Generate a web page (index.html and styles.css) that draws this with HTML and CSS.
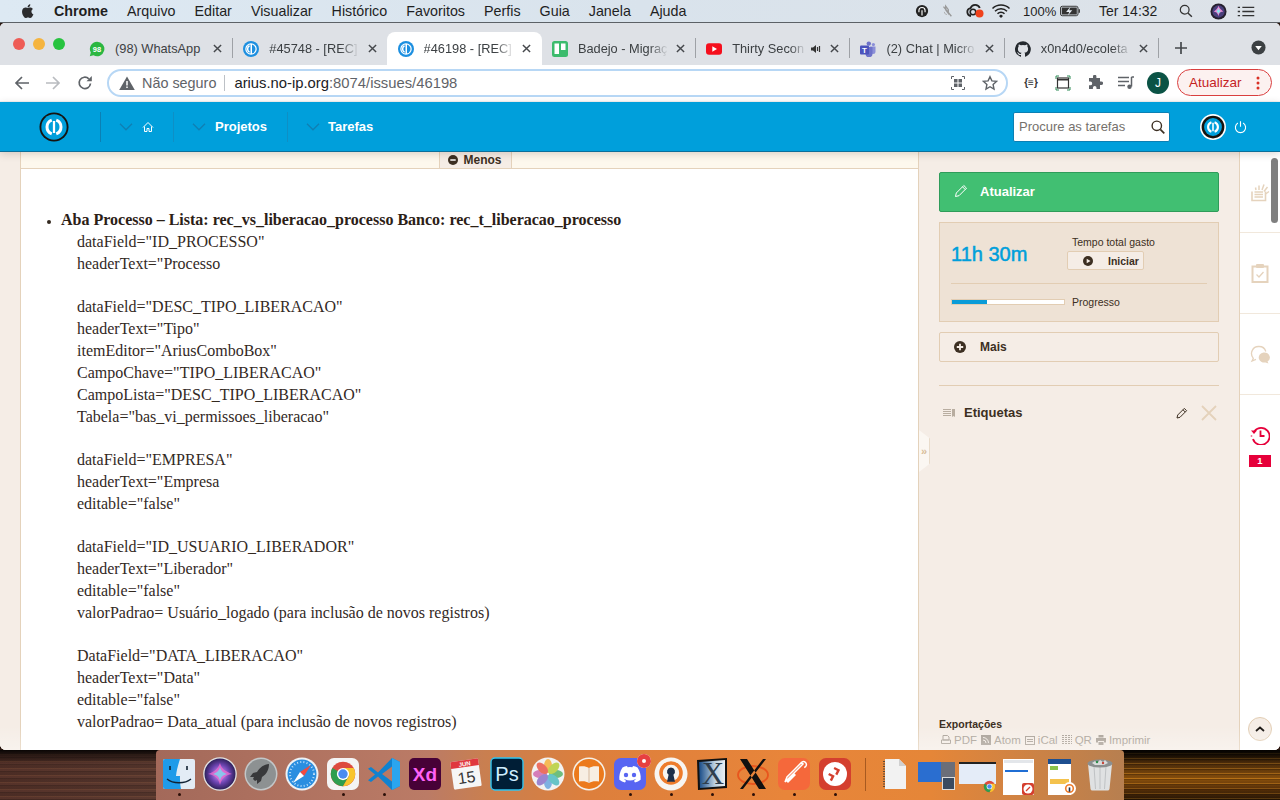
FILE: index.html
```html
<!DOCTYPE html>
<html lang="pt-BR">
<head>
<meta charset="utf-8">
<title>#46198 - [REC]</title>
<link rel="stylesheet" href="styles.css">
</head>
<body>
<svg class="defs" width="0" height="0" aria-hidden="true">
  <symbol id="arius" viewBox="0 0 32 32">
    <circle cx="16" cy="16" r="13.500" fill="#009fdb"/>
    <path d="M13.600 8.700A7.800 7.800 0 0 0 13.600 23.300" fill="none" stroke="#fff" stroke-width="3.200"/>
    <path d="M18.400 8.700A7.800 7.800 0 0 1 18.400 23.300" fill="none" stroke="#fff" stroke-width="3.200"/>
    <path d="M16 9.500V22.500" stroke="#fff" stroke-width="2.400"/>
  </symbol>
  <symbol id="favarius" viewBox="0 0 32 32">
    <circle cx="16" cy="16" r="16" fill="#1c8fe0"/>
    <circle cx="16" cy="16" r="11.500" fill="#fff"/>
    <circle cx="16" cy="16" r="9" fill="#1c8fe0"/>
    <path d="M13 9.500A7.500 7.500 0 0 0 13 22.500" fill="none" stroke="#fff" stroke-width="3"/>
    <path d="M16.500 6V26" stroke="#fff" stroke-width="3"/>
  </symbol>
  <symbol id="closex" viewBox="0 0 10 10"><path d="M1 1l8 8M9 1L1 9" stroke="#45484c" stroke-width="1.600"/></symbol>
  <symbol id="chromelogo" viewBox="0 0 32 32">
    <circle cx="16" cy="16" r="14" fill="#dd4b3e"/>
    <path d="M16 16L3.900 9A14 14 0 0 0 16 30L23 18z" fill="#2e9e4f"/>
    <path d="M16 9H28.100A14 14 0 0 1 16 30L23 18z" fill="#f8c52d"/>
    <circle cx="16" cy="16" r="7" fill="#fff"/>
    <circle cx="16" cy="16" r="5.400" fill="#4a8bf0"/>
  </symbol>
</svg>

<div class="desktop">
  <header class="menubar">
    <svg class="apple" viewBox="0 0 14 16"><path d="M11.400 8.500c0-1.700 1.400-2.500 1.500-2.600-.8-1.200-2.100-1.300-2.500-1.400-1.100-.1-2.100.6-2.600.6-.6 0-1.400-.6-2.300-.6C4.300 4.500 3.200 5.200 2.600 6.300c-1.200 2.100-.3 5.300.9 7 .6.800 1.300 1.800 2.200 1.700.9 0 1.200-.6 2.300-.6s1.400.6 2.300.6 1.600-.8 2.100-1.700c.7-1 1-1.900 1-2-.1 0-2-.7-2-2.800zM9.600 3.400c.5-.6.800-1.400.7-2.200-.7 0-1.500.5-2 1.100-.4.500-.8 1.300-.7 2.100.8 0 1.500-.4 2-1z" fill="#2c2c2e"/></svg>
    <nav class="menus">
      <span class="menu menu-app">Chrome</span>
      <span class="menu">Arquivo</span>
      <span class="menu">Editar</span>
      <span class="menu">Visualizar</span>
      <span class="menu">Histórico</span>
      <span class="menu">Favoritos</span>
      <span class="menu">Perfis</span>
      <span class="menu">Guia</span>
      <span class="menu">Janela</span>
      <span class="menu">Ajuda</span>
    </nav>
    <div class="status">
      <svg class="st st-a" viewBox="0 0 16 16"><circle cx="8" cy="8" r="7" fill="#222"/><path d="M8 4a3.500 3.500 0 0 0-3.500 3.500v2M8 4a3.500 3.500 0 0 1 3.500 3.500v2M8 7v6" stroke="#fff" stroke-width="1.300" fill="none"/></svg>
      <svg class="st st-b" viewBox="0 0 16 16"><path d="M6.500 2.500l3 4v4l-3-4zM4 3l9 11" stroke="#999" stroke-width="1.500" fill="none"/><path d="M5 9c0 2 1.500 3 3 3" stroke="#aaa" fill="none"/></svg>
      <svg class="st st-c" viewBox="0 0 20 16"><path d="M6 13a4 4 0 0 1-.5-7.900A5 5 0 0 1 14.800 5" fill="none" stroke="#222" stroke-width="1.800"/><circle cx="8" cy="9" r="2.800" fill="none" stroke="#222" stroke-width="1.600"/><circle cx="14.500" cy="10.500" r="4" fill="#f0421c"/></svg>
      <svg class="st st-d" viewBox="0 0 20 16"><path d="M1.500 5.500a12 12 0 0 1 17 0M4 8.200a8.500 8.500 0 0 1 12 0M6.500 10.800a5 5 0 0 1 7 0" fill="none" stroke="#222" stroke-width="1.500"/><path d="M8 13l2-1.600 2 1.600-2 2z" fill="#222"/></svg>
      <span class="st-pct">100%</span>
      <svg class="st st-e" viewBox="0 0 24 12"><rect x=".6" y=".6" width="20" height="10.800" rx="2" fill="none" stroke="#333" stroke-width="1.100"/><rect x="2" y="2" width="17.200" height="8" fill="#333"/><path d="M22 4v4" stroke="#333" stroke-width="1.500"/><path d="M12 1L7 7h3.500L9 11l5-6h-3.500z" fill="#e6edf3"/></svg>
      <span class="st-time">Ter 14:32</span>
      <svg class="st st-f" viewBox="0 0 16 16"><circle cx="6.500" cy="6.500" r="5" fill="none" stroke="#333" stroke-width="1.400"/><path d="M10.200 10.200l4.500 4.500" stroke="#333" stroke-width="1.600"/></svg>
      <svg class="st st-g" viewBox="0 0 18 18"><circle cx="9" cy="9" r="8.500" fill="#26202e"/><circle cx="9" cy="9" r="6.500" fill="#4a3f7c"/><path d="M9 3c1 3 3 4 5 6-2 .5-4 0-5 5-1-4-3-4.500-5-5 2-1 4-3 5-6z" fill="#e887d2"/><path d="M9 5c.5 2 1.500 3 2.500 4-1 .2-2 .5-2.500 3-.5-2-1.500-2.800-2.500-3 1-.7 2-2 2.500-4z" fill="#8fe3ee"/></svg>
      <svg class="st st-h" viewBox="0 0 18 12"><path d="M5 1.500h13M5 6h13M5 10.500h13M0 1.500h2.500M0 6h2.500M0 10.500h2.500" stroke="#333" stroke-width="1.500"/></svg>
    </div>
  </header>

  <main class="window">
    <div class="tabstrip">
      <div class="lights"><i class="light l-r"></i><i class="light l-y"></i><i class="light l-g"></i></div>
      <div class="tab">
        <svg class="fav" viewBox="0 0 16 16"><path d="M8 .8a7.200 7.200 0 0 0-6.200 10.800L.8 15.200l3.700-1A7.200 7.200 0 1 0 8 .8z" fill="#2bb741"/><text x="8" y="10.600" class="fav-num">98</text></svg>
        <span class="tab-title tab-title-plain">(98) WhatsApp</span>
        <svg class="tab-x"><use href="#closex"/></svg>
      </div>
      <div class="tab tab-nosep">
        <svg class="fav"><use href="#favarius"/></svg>
        <span class="tab-title">#45748 - [REC]</span>
        <svg class="tab-x"><use href="#closex"/></svg>
      </div>
      <div class="tab tab-on">
        <svg class="fav"><use href="#favarius"/></svg>
        <span class="tab-title">#46198 - [REC]</span>
        <svg class="tab-x"><use href="#closex"/></svg>
      </div>
      <div class="tab">
        <svg class="fav" viewBox="0 0 16 16"><rect width="16" height="16" rx="2.500" fill="#3cbb6d"/><rect x="2.500" y="2.500" width="4.500" height="10.500" fill="#fff"/><rect x="9" y="2.500" width="4.500" height="6.500" fill="#fff"/></svg>
        <span class="tab-title">Badejo - Migraç</span>
        <svg class="tab-x"><use href="#closex"/></svg>
      </div>
      <div class="tab">
        <svg class="fav" viewBox="0 0 16 16"><rect y="2.200" width="16" height="11.600" rx="3" fill="#f50f1d"/><path d="M6.300 5.300v5.400L11 8z" fill="#fff"/></svg>
        <span class="tab-title tab-title-audio">Thirty Secon</span>
        <svg class="audio" viewBox="0 0 12 12"><path d="M1 4.500h2L6 2v8L3 7.500H1z" fill="#333"/><path d="M7.500 4v4M9.500 3v6" stroke="#333" stroke-width="1.200"/></svg>
        <svg class="tab-x"><use href="#closex"/></svg>
      </div>
      <div class="tab">
        <svg class="fav" viewBox="0 0 16 16"><circle cx="8.800" cy="2.600" r="2.200" fill="#6d72c9"/><circle cx="13.400" cy="3.600" r="1.600" fill="#8b8fd8"/><path d="M10 5.500h5.500v5a2.500 2.500 0 0 1-5 0z" fill="#8b8fd8"/><path d="M5 6h7.500v6.500a3.500 3.500 0 0 1-7 .5z" fill="#6d72c9"/><rect y="4.500" width="9" height="9" rx="1" fill="#4b53bc"/><text x="4.500" y="11.800" class="fav-t">T</text></svg>
        <span class="tab-title">(2) Chat | Micro</span>
        <svg class="tab-x"><use href="#closex"/></svg>
      </div>
      <div class="tab">
        <svg class="fav" viewBox="0 0 16 16"><path d="M8 .2a8 8 0 0 0-2.500 15.600c.4.100.5-.2.500-.4v-1.400c-2.200.5-2.700-1-2.700-1-.4-.9-.9-1.200-.9-1.200-.7-.5.100-.5.100-.5.800.1 1.200.8 1.200.8.700 1.200 1.900.9 2.300.7.100-.5.300-.9.500-1.100-1.800-.2-3.600-.9-3.600-4 0-.9.300-1.600.8-2.100-.1-.2-.4-1 .1-2.100 0 0 .7-.2 2.200.8a7.600 7.600 0 0 1 4 0c1.500-1 2.200-.8 2.200-.8.400 1.100.2 1.900.1 2.100.5.600.8 1.300.8 2.100 0 3.100-1.900 3.700-3.700 3.900.3.300.6.800.6 1.500v2.200c0 .2.100.5.600.4A8 8 0 0 0 8 .2z" fill="#24292e"/></svg>
        <span class="tab-title">x0n4d0/ecoleta</span>
        <svg class="tab-x"><use href="#closex"/></svg>
      </div>
      <svg class="newtab" viewBox="0 0 14 14"><path d="M7 1v12M1 7h12" stroke="#45484c" stroke-width="1.700"/></svg>
      <svg class="tabmenu" viewBox="0 0 16 16"><circle cx="8" cy="8" r="7.500" fill="#3c4043"/><path d="M4.500 6.500h7L8 11z" fill="#fff"/></svg>
    </div>

    <div class="toolbar">
      <svg class="tb back" viewBox="0 0 16 16"><path d="M15 8H2M8 2L2 8l6 6" fill="none" stroke="#5f6368" stroke-width="1.700"/></svg>
      <svg class="tb fwd" viewBox="0 0 16 16"><path d="M1 8h13M8 2l6 6-6 6" fill="none" stroke="#b9bcc0" stroke-width="1.700"/></svg>
      <svg class="tb reload" viewBox="0 0 16 16"><path d="M13.500 8.500A5.700 5.700 0 1 1 11.800 3.800" fill="none" stroke="#5f6368" stroke-width="1.700"/><path d="M9.500 6.200h5.300V1z" fill="#5f6368"/></svg>
      <div class="omnibox">
        <svg class="warn" viewBox="0 0 16 14"><path d="M8 .5L15.800 14H.2z" fill="#5f6368"/><path d="M8 5v4.500M8 10.500v1.500" stroke="#fff" stroke-width="1.500"/></svg>
        <span class="insecure">Não seguro</span>
        <i class="omni-sep"></i>
        <span class="url"><b class="host">arius.no-ip.org</b>:8074/issues/46198</span>
        <svg class="omni-qr" viewBox="0 0 14 14"><path d="M.5 3V.5H3M11 .5h2.500V3M13.500 11v2.500H11M3 13.500H.5V11" fill="none" stroke="#5f6368"/><path d="M3 3h3.500v3.500H3zM7.500 3H11v3.500H7.500zM3 7.500h3.500V11H3zM7.500 7.500H11V11H7.500z" fill="#5f6368"/></svg>
        <svg class="omni-star" viewBox="0 0 16 16"><path d="M8 1.700l1.900 4.200 4.600.5-3.400 3.100.9 4.500L8 11.700 4 14l.9-4.500L1.500 6.400l4.600-.5z" fill="none" stroke="#5f6368" stroke-width="1.400"/></svg>
      </div>
      <span class="ext ext-json">{≡}</span>
      <svg class="ext ext-cap" viewBox="0 0 16 16"><path d="M1 4V1h3M12 1h3v3M15 12v3h-3M4 15H1v-3" fill="none" stroke="#2e8b57" stroke-width="1"/><rect x="2.500" y="3" width="11" height="10" fill="none" stroke="#333" stroke-width="1.200"/><path d="M2.500 4.800h11" stroke="#333" stroke-width="1.600"/></svg>
      <svg class="ext ext-puz" viewBox="0 0 16 16"><path d="M6 1.500a1.700 1.700 0 0 1 3.400 0V3H13v3.500h1.300a1.800 1.800 0 0 1 0 3.600H13V14H9.500v-1.300a1.800 1.800 0 0 0-3.600 0V14H2v-3.700h1.300a1.900 1.900 0 0 0 0-3.800H2V3h4z" fill="#5f6368"/></svg>
      <svg class="ext ext-mus" viewBox="0 0 16 14"><path d="M0 1.500h11M0 5.500h11M0 9.500h7" stroke="#5f6368" stroke-width="1.400"/><path d="M13.500 1v9.500" stroke="#5f6368" stroke-width="1.500"/><path d="M13.500 1H16" stroke="#5f6368" stroke-width="1.500"/><circle cx="11.500" cy="10.800" r="2.200" fill="#5f6368"/></svg>
      <span class="avatar">J</span>
      <div class="update-pill"><span class="update-txt">Atualizar</span><svg class="kebab" viewBox="0 0 4 14"><circle cx="2" cy="2" r="1.500"/><circle cx="2" cy="7" r="1.500"/><circle cx="2" cy="12" r="1.500"/></svg></div>
    </div>

    <div class="topnav">
      <svg class="logo" viewBox="0 0 32 32"><circle cx="16" cy="16" r="15.500" fill="#17130f"/><use href="#arius"/></svg>
      <i class="nav-div nav-div-first"></i>
      <div class="navitem navitem-home">
        <svg class="chev" viewBox="0 0 14 8"><path d="M1 .8l6 6 6-6" fill="none" stroke="#0f7fb3" stroke-width="1.300"/></svg>
        <svg class="home" viewBox="0 0 12 12"><path d="M1 6.500L6 1.500l5 5M2.500 5.500v5h2.500V7.500h2v3h2.500v-5" fill="none" stroke="#fff" stroke-width="1"/></svg>
      </div>
      <i class="nav-div"></i>
      <div class="navitem navitem-proj">
        <svg class="chev" viewBox="0 0 14 8"><path d="M1 .8l6 6 6-6" fill="none" stroke="#0f7fb3" stroke-width="1.300"/></svg>
        <span class="navlabel">Projetos</span>
      </div>
      <i class="nav-div"></i>
      <div class="navitem navitem-task">
        <svg class="chev" viewBox="0 0 14 8"><path d="M1 .8l6 6 6-6" fill="none" stroke="#0f7fb3" stroke-width="1.300"/></svg>
        <span class="navlabel">Tarefas</span>
      </div>
      <div class="search">
        <span class="search-ph">Procure as tarefas</span>
        <svg class="search-ic" viewBox="0 0 14 14"><circle cx="5.800" cy="5.800" r="4.700" fill="none" stroke="#3c2f22" stroke-width="1.400"/><path d="M9.300 9.300l4 4" stroke="#3c2f22" stroke-width="1.700"/></svg>
      </div>
      <svg class="user" viewBox="0 0 32 32"><circle cx="16" cy="16" r="16" fill="#fff"/><circle cx="16" cy="16" r="14" fill="#17130f"/><use href="#arius" x="3" y="3" width="26" height="26"/></svg>
      <svg class="power" viewBox="0 0 14 14"><path d="M4.200 2.800a5.500 5.500 0 1 0 5.600 0M7 .8v6" fill="none" stroke="#fff" stroke-width="1.200"/></svg>
    </div>

    <div class="page">
      <div class="gutter"></div>
      <section class="content">
        <div class="details-bar"><div class="less"><svg class="less-ic" viewBox="0 0 10 10"><circle cx="5" cy="5" r="5" fill="#3c2f22"/><path d="M2.300 5h5.400" stroke="#fff" stroke-width="1.600"/></svg><span>Menos</span></div></div>
        <div class="doc">
          <ul class="doc-list"><li><strong>Aba Processo – Lista: rec_vs_liberacao_processo Banco: rec_t_liberacao_processo</strong>
            <div class="grp">dataField="ID_PROCESSO"<br>headerText="Processo</div>
            <div class="grp">dataField="DESC_TIPO_LIBERACAO"<br>headerText="Tipo"<br>itemEditor="AriusComboBox"<br>CampoChave="TIPO_LIBERACAO"<br>CampoLista="DESC_TIPO_LIBERACAO"<br>Tabela="bas_vi_permissoes_liberacao"</div>
            <div class="grp">dataField="EMPRESA"<br>headerText="Empresa<br>editable="false"</div>
            <div class="grp">dataField="ID_USUARIO_LIBERADOR"<br>headerText="Liberador"<br>editable="false"<br>valorPadrao= Usuário_logado (para inclusão de novos registros)</div>
            <div class="grp">DataField="DATA_LIBERACAO"<br>headerText="Data"<br>editable="false"<br>valorPadrao= Data_atual (para inclusão de novos registros)</div>
          </li></ul>
        </div>
      </section>

      <aside class="side">
        <div class="btn-update">
          <svg class="btn-ic" viewBox="0 0 14 14"><path d="M1.500 12.500l.8-3.500L9.800 1.500l2.700 2.700L5 11.700zM8.500 2.800l2.700 2.700" fill="none" stroke="#fff" stroke-width="1"/></svg>
          <span>Atualizar</span>
        </div>
        <div class="time-panel">
          <div class="time-row">
            <span class="time-val">11h 30m</span>
            <div class="time-col">
              <span class="time-lbl">Tempo total gasto</span>
              <div class="start"><svg class="start-ic" viewBox="0 0 10 10"><circle cx="5" cy="5" r="5" fill="#3c2f22"/><path d="M3.700 2.700v4.600L7.500 5z" fill="#f5ede6"/></svg><span>Iniciar</span></div>
            </div>
          </div>
          <div class="prog-row">
            <div class="bar"><div class="bar-fill" style="width:31%"></div></div>
            <span class="prog-lbl">Progresso</span>
          </div>
        </div>
        <div class="more">
          <svg class="more-ic" viewBox="0 0 12 12"><circle cx="6" cy="6" r="6" fill="#3c2f22"/><path d="M6 2.800v6.400M2.800 6h6.400" stroke="#f5ede6" stroke-width="1.800"/></svg>
          <span>Mais</span>
        </div>
        <div class="tags">
          <svg class="tags-ic" viewBox="0 0 12 8"><path d="M0 .5h8M0 2.500h8M0 4.500h8M0 6.500h8" stroke="#b8ada0" stroke-width="1"/><path d="M9 0h3v8l-1.500-1L9 8z" fill="#b8ada0"/></svg>
          <span class="tags-lbl">Etiquetas</span>
          <svg class="tags-pen" viewBox="0 0 12 12"><path d="M1 11l.7-3L8.300 1.400l2.300 2.300L4 10.300zM7 2.800l2.300 2.300" fill="none" stroke="#3c2f22" stroke-width="1"/></svg>
          <svg class="tags-x" viewBox="0 0 16 16"><path d="M1 1l14 14M15 1L1 15" stroke="#e4d2bb" stroke-width="1.800"/></svg>
        </div>
        <div class="exports">
          <div class="exp-title">Exportações</div>
          <div class="exp-links">
            <span class="exp"><svg class="exp-ic" viewBox="0 0 10 10"><path d="M2 .5h4.500L8 2v3H2zM.5 5h9v3.500h-9z" fill="none" stroke="#a89f95"/></svg>PDF</span>
            <span class="exp"><svg class="exp-ic" viewBox="0 0 10 10"><rect width="10" height="10" fill="#a89f95"/><path d="M2 2.500a5.500 5.500 0 0 1 5.500 5.500M2 5a3 3 0 0 1 3 3" fill="none" stroke="#f5ede6"/></svg>Atom</span>
            <span class="exp"><svg class="exp-ic" viewBox="0 0 10 10"><rect x=".5" y="1.500" width="9" height="8" fill="none" stroke="#a89f95"/><path d="M2 4.500h6M2 6.500h6" stroke="#a89f95"/></svg>iCal</span>
            <span class="exp"><svg class="exp-ic" viewBox="0 0 10 10"><path d="M0 .5h10M0 2.500h10M0 4.500h10M0 6.500h10M0 8.500h10" stroke="#a89f95" stroke-dasharray="2 1"/></svg>QR</span>
            <span class="exp"><svg class="exp-ic" viewBox="0 0 10 10"><path d="M2.500 0h5v2.500h-5zM0 3h10v4.500H8V6H2v1.500H0zM2.500 7h5v3h-5z" fill="#a89f95"/></svg>Imprimir</span>
          </div>
        </div>
      </aside>
      <div class="collapse"><span>»</span></div>

      <aside class="rail">
        <div class="rail-cell">
          <svg class="rail-ic" viewBox="0 0 20 20"><path d="M2 9.500v9h13.500v-9" fill="none" stroke="#e5d3bd" stroke-width="1.600"/><path d="M4.500 10h8.500M4.500 12.500h8.500M4.500 15h8.500" stroke="#e5d3bd" stroke-width="1.300"/><path d="M6 8L5.500 5.500M9 8L9 3.500M12 8l2-5.500M14 9.500l3.500-4.500M15.500 12l3.500-2.500" stroke="#e5d3bd" stroke-width="1.500"/></svg>
        </div>
        <div class="rail-cell">
          <svg class="rail-ic" viewBox="0 0 20 20"><path d="M2.500 3.500h15v15.500h-15z" fill="none" stroke="#e5d3bd" stroke-width="2"/><rect x="6" y="1" width="8" height="4" rx="1" fill="#e5d3bd"/><path d="M6.500 11.500l2.500 2.500 4.500-5" fill="none" stroke="#e5d3bd" stroke-width="1.300"/></svg>
        </div>
        <div class="rail-cell">
          <svg class="rail-ic" viewBox="0 0 20 20"><path d="M3.500 14l-1.500 3 4-1.600" fill="none" stroke="#e5d3bd" stroke-width="1.300"/><path d="M3.200 14A7 7 0 0 1 9 2.500a7 7 0 0 1 6.800 5" fill="none" stroke="#e5d3bd" stroke-width="1.300"/><path d="M13.500 8.500a5.700 5 0 0 1 4 9l1 2-3-1a5.700 5 0 1 1-2-10z" fill="#e5d3bd"/></svg>
        </div>
        <div class="rail-cell rail-hist">
          <svg class="rail-ic" viewBox="0 0 20 20"><path d="M4.500 6A8.500 8.500 0 1 1 3 14" fill="none" stroke="#e6003a" stroke-width="1.800"/><path d="M1 5.500h6l-3 3.500z" fill="#e6003a"/><path d="M10.500 5.500v5.500h4" fill="none" stroke="#e6003a" stroke-width="1.800"/><path d="M1.500 10.500v1" stroke="#e6003a" stroke-width="1.500"/></svg>
          <span class="rail-badge">1</span>
        </div>
        <div class="rail-fill"></div>
        <div class="rail-up"><svg class="up-ic" viewBox="0 0 10 6"><path d="M1 5l4-3.500L9 5" fill="none" stroke="#17130f" stroke-width="1.800"/></svg></div>
      </aside>
      <div class="scrollthumb"></div>
      <div class="fade"></div>
    </div>
  </main>

  <footer class="dockrow">
    <div class="dock">
      <div class="di run"><svg class="dk" viewBox="0 0 34 34"><rect x="1" y="2" width="32" height="30" rx="2" fill="#e3ecf5"/><path d="M3 2h15c-2 6-3.500 12-4 17h4c-.2 4 .2 9 1 13H3a2 2 0 0 1-2-2V4a2 2 0 0 1 2-2z" fill="#1f9be9"/><path d="M8 9v4M25 9v4" stroke="#123" stroke-width="1.600"/><path d="M5 22c6 5 18 5 24 0" fill="none" stroke="#123" stroke-width="1.300"/></svg></div>
      <div class="di"><svg class="dk" viewBox="0 0 34 34"><defs><radialGradient id="sg" cx=".5" cy=".5" r=".6"><stop offset="0" stop-color="#e0a0ff"/><stop offset=".5" stop-color="#6b43b0"/><stop offset="1" stop-color="#101030"/></radialGradient></defs><circle cx="17" cy="17" r="16.800" fill="#e3e3e3"/><circle cx="17" cy="17" r="15.500" fill="url(#sg)"/><path d="M17 6c1.500 6 5 8 12 11-7 1.500-10 4-12 11-1.500-7-5-9.500-12-11 6-2 10-5 12-11z" fill="#ea6ad0" opacity=".8"/><path d="M17 10c1 4 3 5.500 7 7-4 1-6 2.500-7 7-1-4.500-3-6-7-7 4-1.500 6-3 7-7z" fill="#74dbf0" opacity=".8"/></svg></div>
      <div class="di"><svg class="dk" viewBox="0 0 34 34"><circle cx="17" cy="17" r="16.500" fill="#c3c7c8"/><circle cx="17" cy="17" r="15" fill="#8d9192"/><path d="M25 7c-5 .5-9 3-12 8l-4 1-3 4h4l-1 2 2 2 2-1v4l4-3 1-4c5-3 7-8 7-13z" fill="#38393b"/></svg></div>
      <div class="di"><svg class="dk" viewBox="0 0 34 34"><circle cx="17" cy="17" r="16.500" fill="#eef2f5"/><circle cx="17" cy="17" r="14.500" fill="#2a8ee0"/><circle cx="17" cy="17" r="12" fill="none" stroke="#bfe0fa" stroke-dasharray="1 2.200" stroke-width="2"/><path d="M26 8L15 15l4 4z" fill="#f04a40"/><path d="M8 26l7-11 4 4z" fill="#fff"/></svg></div>
      <div class="di run"><svg class="dk" viewBox="0 0 34 34"><rect x="1" y="1" width="32" height="32" rx="7" fill="#f4f4f4"/><use href="#chromelogo" x="3" y="3" width="28" height="28"/></svg></div>
      <div class="di run"><svg class="dk" viewBox="0 0 34 34"><path d="M25 1l8 4v24l-8 4-14-13.500-7 5.500-3-1.800 7-5.700-7-5.700 3-1.800 7 5.500zM25 9.500L15 17l10 7.500z" fill="#0f82d0"/><path d="M25 1l8 4v24l-8 4z" fill="#2aa5ef"/></svg></div>
      <div class="di"><svg class="dk" viewBox="0 0 34 34"><rect x="1" y="1" width="32" height="32" rx="5" fill="#470137"/><text x="17" y="24" class="dk-xd">Xd</text></svg></div>
      <div class="di"><svg class="dk" viewBox="0 0 34 34"><g transform="rotate(-8 17 17)"><rect x="3" y="3" width="28" height="28" rx="1.500" fill="#f6f6f6"/><path d="M3 4.500A1.500 1.500 0 0 1 4.500 3h25A1.500 1.500 0 0 1 31 4.500V10H3z" fill="#e0383e"/><text x="17" y="9" class="dk-jun">JUN</text><text x="17" y="26" class="dk-day">15</text></g></svg></div>
      <div class="di"><svg class="dk" viewBox="0 0 34 34"><rect x="1" y="1" width="32" height="32" rx="4" fill="#001e36" stroke="#31c5f0" stroke-width="1.400"/><text x="17" y="24" class="dk-ps">Ps</text></svg></div>
      <div class="di"><svg class="dk" viewBox="0 0 34 34"><circle cx="17" cy="17" r="16.500" fill="#f2f2f2"/><g opacity=".85"><ellipse cx="17" cy="9" rx="4" ry="7" fill="#f6b23c"/><ellipse cx="17" cy="25" rx="4" ry="7" fill="#6aa6e0"/><ellipse cx="9" cy="17" rx="7" ry="4" fill="#d06ab0"/><ellipse cx="25" cy="17" rx="7" ry="4" fill="#58b56a"/><ellipse cx="11.300" cy="11.300" rx="4" ry="7" transform="rotate(-45 11.300 11.300)" fill="#ea5a4a"/><ellipse cx="22.700" cy="11.300" rx="4" ry="7" transform="rotate(45 22.700 11.300)" fill="#b8cf3a"/><ellipse cx="11.300" cy="22.700" rx="4" ry="7" transform="rotate(45 11.300 22.700)" fill="#8c73c9"/><ellipse cx="22.700" cy="22.700" rx="4" ry="7" transform="rotate(-45 22.700 22.700)" fill="#4fbcc0"/></g></svg></div>
      <div class="di"><svg class="dk" viewBox="0 0 34 34"><circle cx="17" cy="17" r="16.500" fill="#f5f0e8"/><circle cx="17" cy="17" r="15" fill="#ec7a1c"/><path d="M17 11c-3-2-6-2-10-1.500v15c4-.5 7-.5 10 1.500 3-2 6-2 10-1.500v-15C23 9 20 9 17 11z" fill="#f7eee3"/><path d="M17 11v15" stroke="#d5b99e"/></svg></div>
      <div class="di run badge-wrap"><svg class="dk" viewBox="0 0 34 34"><rect x="1" y="1" width="32" height="32" rx="7" fill="#5865f2"/><path d="M24.500 10.500A17 17 0 0 0 20 9l-.6 1.200a16 16 0 0 0-4.800 0L14 9a17 17 0 0 0-4.500 1.500C6.800 14.700 6 18.700 6.400 22.700A17 17 0 0 0 12 25.500l1.100-1.800-1.800-1 .5-.4c3.400 1.600 7 1.600 10.400 0l.5.4-1.800 1 1.100 1.800a17 17 0 0 0 5.600-2.800c.5-4.600-.7-8.600-3.100-12.200z" fill="#fff"/><circle cx="13" cy="18" r="2.200" fill="#5865f2"/><circle cx="21" cy="18" r="2.200" fill="#5865f2"/></svg><i class="dock-badge"></i></div>
      <div class="di run"><svg class="dk" viewBox="0 0 34 34"><circle cx="17" cy="17" r="16.500" fill="#f7f5f2"/><circle cx="17" cy="16" r="10" fill="none" stroke="#ee7c2c" stroke-width="3.600"/><path d="M17 10.500a4 4 0 0 1 2.400 7.200l1.600 7h-8l1.600-7a4 4 0 0 1 2.400-7.200z" fill="#1d2f4a"/></svg></div>
      <div class="di run"><svg class="dk" viewBox="0 0 34 34"><defs><linearGradient id="xg" x1="0" x2="1"><stop offset="0" stop-color="#174a86"/><stop offset=".6" stop-color="#bcd0e0"/><stop offset="1" stop-color="#e8eef2"/></linearGradient></defs><path d="M2 3l30-2v30L3 33z" fill="#111"/><path d="M4 5l26-2v26L5 31z" fill="url(#xg)"/><text x="18" y="27" class="dk-x">X</text></svg></div>
      <div class="di run"><svg class="dk" viewBox="0 0 34 34"><ellipse cx="17" cy="18" rx="15" ry="9" fill="none" stroke="#e8561e" stroke-width="1.800"/><path d="M4 2h7l19 30h-7zM30 2h-3L4 32h3z" fill="#101010"/></svg></div>
      <div class="di run"><svg class="dk" viewBox="0 0 34 34"><rect x="1" y="1" width="32" height="32" rx="7" fill="#f5683b"/><path d="M26 7l-9 9-6 6-3 3 2-5 7-7 7-7zM23.500 6.800a3 3 0 1 1 3.700 3.700" fill="none" stroke="#fff" stroke-width="1.500"/><path d="M9 24l8-8 2 2-8 8z" fill="#fff"/></svg></div>
      <div class="di run"><svg class="dk" viewBox="0 0 34 34"><rect x="1" y="1" width="32" height="32" rx="7" fill="#d43f2e"/><circle cx="17" cy="17" r="12" fill="#fff"/><path d="M18 11l3.500 3.500L18 18M11 15l3.500 3.500L11 22" transform="rotate(-18 17 17)" fill="none" stroke="#d43f2e" stroke-width="2.400"/></svg></div>
      <i class="dock-sep"></i>
      <div class="di"><svg class="dk" viewBox="0 0 34 34"><path d="M7 2h14l7 7v23H7z" fill="#f2f2f2"/><path d="M21 2l7 7h-7z" fill="#d0d0d0"/><path d="M6 4v27" stroke="#333" stroke-dasharray="1 1.500" stroke-width="1.500"/></svg></div>
      <div class="di"><div class="thumb th-a"><i class="th-a-blue"></i><i class="th-a-grey"></i><i class="th-a-mini"></i></div></div>
      <div class="di"><div class="thumb th-b"><i class="th-b-bar"></i><i class="th-b-page"></i><svg class="th-b-logo" viewBox="0 0 32 32"><use href="#chromelogo"/></svg></div></div>
      <div class="di"><div class="thumb th-c"><i class="th-c-line"></i><i class="th-c-blue"></i><svg class="th-c-app" viewBox="0 0 12 12"><rect width="12" height="12" rx="2" fill="#d43f2e"/><circle cx="6" cy="6" r="4.500" fill="#fff"/><path d="M4 8l4-4" stroke="#d43f2e" stroke-width="1.200"/></svg></div></div>
      <div class="di"><div class="thumb th-d"><i class="th-d-head"></i><i class="th-d-green"></i><i class="th-d-chart"></i><svg class="th-d-app" viewBox="0 0 12 12"><circle cx="6" cy="6" r="6" fill="#fff"/><circle cx="6" cy="6" r="3.500" fill="none" stroke="#ee7c2c" stroke-width="1.500"/><path d="M6 5v4" stroke="#1d2f4a" stroke-width="1.500"/></svg></div></div>
      <div class="di"><svg class="dk" viewBox="0 0 34 34"><path d="M5 7h24l-2.500 25a2 2 0 0 1-2 1.500H9.500a2 2 0 0 1-2-1.500z" fill="#dfe1e2"/><path d="M11 9l1.500 23M17 9v23M23 9l-1.500 23" stroke="#bfc2c4"/><ellipse cx="17" cy="6.500" rx="12.500" ry="4" fill="#8b8f90"/><path d="M9 6l3-2 2 2 3-3 3 2 2-2 3 3-4 2H12z" fill="#d9dbdc"/><circle cx="14" cy="5" r="1.200" fill="#2c8e4a"/><circle cx="20" cy="6" r="1.200" fill="#c6453a"/></svg></div>
    </div>
  </footer>
</div>
</body>
</html>
```
FILE: styles.css
```css
* { box-sizing: border-box; }
html, body { margin: 0; padding: 0; }
body { width: 1280px; height: 800px; overflow: hidden; font-family: "Liberation Sans", Arial, sans-serif; }
.defs { position: absolute; }
svg { display: block; flex: none; }
i { display: block; font-style: normal; }

.desktop { width: 1280px; height: 800px; display: flex; flex-direction: column; background: #2a1710; }

/* mac menu bar */
.menubar { height: 23px; flex: none; display: flex; align-items: center; background: linear-gradient(90deg, #dde9f3, #d9e3ec 50%, #dde2e8); border-bottom: 1px solid #5c6166; color: #1f1f1f; font-size: 14.300px; }
.apple { width: 14px; height: 16px; margin-left: 20px; }
.menus { display: flex; margin-left: 20px; }
.menu { margin-right: 19px; white-space: nowrap; }
.menu-app { font-weight: 700; }
.status { display: flex; align-items: center; margin-left: auto; font-size: 13px; }
.st-a { width: 14px; height: 14px; }
.st-b { width: 14px; height: 14px; margin-left: 11px; }
.st-c { width: 20px; height: 16px; margin-left: 11px; }
.st-d { width: 20px; height: 16px; margin-left: 6px; }
.st-pct { margin-left: 12px; width: 33px; }
.st-e { width: 21px; height: 12px; margin-left: 4px; }
.st-time { margin-left: 18px; font-size: 14px; width: 60px; white-space: nowrap; }
.st-f { width: 14px; height: 14px; margin-left: 20px; }
.st-g { width: 17px; height: 17px; margin-left: 17px; }
.st-h { width: 18px; height: 11px; margin-left: 10px; margin-right: 25px; }

/* browser window */
.window { width: 1280px; height: 727px; flex: none; display: flex; flex-direction: column; position: relative; overflow: hidden; border-radius: 5px 5px 6px 6px; background: #fff; z-index: 1; }

.tabstrip { height: 42px; flex: none; display: flex; align-items: flex-end; background: #dee1e6; font-size: 12.800px; color: #3c4043; }
.lights { width: 79px; height: 42px; flex: none; display: flex; align-items: flex-start; padding: 15px 0 0 13px; gap: 8px; }
.light { width: 12px; height: 12px; border-radius: 50%; }
.l-r { background: #ee5c56; }
.l-y { background: #f5b43f; }
.l-g { background: #27c33f; }
.tab { width: 154.300px; height: 33px; flex: none; display: flex; align-items: center; padding: 0 0 0 10px; position: relative; }
.tab::after { content: ""; position: absolute; right: 0; top: 6px; height: 20px; width: 1px; background: #9ea1a6; }
.tab-on { background: #fff; border-radius: 8px 8px 0 0; margin-left: -1px; width: 155.300px; padding-left: 11px; }
.tab-on::after, .tab-nosep::after { display: none; }
.fav { width: 16px; height: 16px; }
.fav-num { font-size: 7.500px; font-weight: 700; fill: #fff; text-anchor: middle; }
.fav-t { font-size: 8px; font-weight: 700; fill: #fff; text-anchor: middle; }
.tab-title { width: 94px; margin-left: 10px; white-space: nowrap; -webkit-mask-image: linear-gradient(90deg, #000 76%, transparent 96%); mask-image: linear-gradient(90deg, #000 76%, transparent 96%); }
.tab-title-plain { -webkit-mask-image: none; mask-image: none; }
.tab-title-audio { width: 77px; }
.audio { width: 12px; height: 12px; margin-left: 1px; }
.tab-x { position: absolute; right: 11px; top: 12px; width: 9px; height: 9px; }
.newtab { width: 14px; height: 14px; margin: 0 0 10px 15px; }
.tabmenu { width: 15px; height: 15px; margin: 0 0 10px 63px; }

.toolbar { height: 37px; flex: none; display: flex; align-items: center; padding-bottom: 1px; background: #fff; border-bottom: 1px solid #f1f3f4; }
.tb { width: 16px; height: 16px; }
.back { margin-left: 14px; }
.fwd { margin-left: 15px; }
.reload { margin-left: 16px; }
.omnibox { width: 901px; height: 28px; margin-left: 14px; display: flex; align-items: center; border: 2px solid #b7d7f5; border-radius: 14px; font-size: 14px; color: #5f6368; }
.warn { width: 16px; height: 14px; margin-left: 10px; }
.insecure { margin-left: 7px; white-space: nowrap; font-size: 14.400px; }
.omni-sep { width: 1px; height: 16px; background: #bdc1c6; margin: 0 9px 0 8px; }
.url { white-space: nowrap; font-size: 14.800px; }
.host { font-weight: 400; color: #202124; }
.omni-qr { width: 14px; height: 14px; margin-left: auto; }
.omni-star { width: 16px; height: 16px; margin: 0 8px 0 17px; }
.ext { flex: none; }
.ext-json { width: 16px; margin-left: 15px; font-size: 10px; font-weight: 700; color: #333; white-space: nowrap; text-align: center; }
.ext-cap { width: 16px; height: 16px; margin-left: 16px; }
.ext-puz { width: 16px; height: 16px; margin-left: 16px; }
.ext-mus { width: 16px; height: 14px; margin-left: 15px; }
.avatar { width: 22px; height: 22px; margin-left: 13px; border-radius: 50%; background: #0b5345; color: #fff; font-size: 12px; display: flex; align-items: center; justify-content: center; }
.update-pill { width: 95px; height: 27px; margin-left: 8px; display: flex; align-items: center; border: 1px solid #d93f3f; border-radius: 14px; background: #fcf1f0; font-size: 13.500px; color: #c5221f; padding-left: 11px; }
.update-txt { white-space: nowrap; }
.kebab { width: 4px; height: 14px; margin-left: 14px; fill: #d93025; }

/* app header */
.topnav { height: 50px; flex: none; display: flex; align-items: center; background: #009fdb; border-bottom: 1px solid #0b6f9a; position: relative; z-index: 3; box-shadow: 0 2px 8px rgba(60, 40, 20, .18); color: #fff; }
.logo { width: 30px; height: 30px; margin-left: 39px; }
.nav-div { width: 1px; height: 30px; background: #0e8fc5; }
.nav-div-first { margin-left: 31px; background: #0b80b4; }
.navitem { display: flex; align-items: center; }
.chev { width: 14px; height: 8px; }
.navitem-home { width: 72px; padding-left: 18px; }
.home { width: 12px; height: 12px; margin-left: 9px; }
.navitem-proj { width: 113px; padding-left: 18px; }
.navitem-task { padding-left: 18px; }
.navlabel { margin-left: 9px; font-size: 13px; font-weight: 700; white-space: nowrap; }
.navitem-task .navlabel { margin-left: 8px; }
.search { width: 157px; height: 30px; margin-left: auto; display: flex; align-items: center; background: #fff; border: 1px solid #0b80b4; border-radius: 2px; padding: 0 4px 0 5px; }
.search-ph { font-size: 13px; color: #75716c; white-space: nowrap; }
.search-ic { width: 14px; height: 14px; margin-left: auto; }
.user { width: 26px; height: 26px; margin-left: 30px; }
.power { width: 13px; height: 14px; margin: 0 33px 0 8px; }

/* page */
.page { flex: 1; min-height: 0; display: flex; position: relative; background: #f5ede6; }
.gutter { width: 20px; flex: none; background: #f5ede6; }
.content { width: 899px; flex: none; background: #fff; border-left: 1px solid #e4d2bb; border-right: 1px solid #e4d2bb; overflow: hidden; }
.details-bar { height: 17px; background: #fdf8ed; border-bottom: 1px solid #e4d2bb; display: flex; justify-content: center; }
.less { width: 73px; height: 16px; margin-left: 11px; display: flex; align-items: center; justify-content: center; gap: 5px; background: #f5ede6; border-left: 1px solid #e4d2bb; border-right: 1px solid #e4d2bb; font-size: 12px; font-weight: 700; color: #3c2f22; }
.less-ic { width: 10px; height: 10px; }
.doc { font-family: "Liberation Serif", "Times New Roman", serif; font-size: 16px; line-height: 22px; color: #33291f; }
.doc-list { margin: 40px 0 0; padding: 0 0 0 40px; }
.doc-list li::marker { font-size: 12px; }
.doc-list strong { color: #2b2016; }
.grp { padding-left: 16px; margin-bottom: 21px; white-space: nowrap; }

.side { width: 320px; flex: none; display: flex; flex-direction: column; padding: 20px 20px 0; color: #3c2f22; position: relative; background: #f5ede6; }
.btn-update { height: 40px; flex: none; display: flex; align-items: center; padding: 0 0 2px 14px; gap: 12px; background: #41bf72; border: 1px solid #2f9c5a; border-radius: 2px; color: #fff; font-size: 13px; font-weight: 700; }
.btn-ic { width: 14px; height: 14px; }
.time-panel { height: 100px; flex: none; margin-top: 10px; background: #eee2d5; border: 1px solid #e2cdb3; padding: 0 11px; display: flex; flex-direction: column; }
.time-row { height: 61px; flex: none; display: flex; align-items: flex-start; border-bottom: 1px solid #e2cdb3; }
.time-val { width: 116px; margin-top: 20px; font-size: 20px; line-height: 22px; color: #009fdb; white-space: nowrap; -webkit-text-stroke: .5px #009fdb; }
.time-col { display: flex; flex-direction: column; align-items: flex-start; padding-top: 13px; }
.time-lbl { font-size: 10.500px; line-height: 13px; margin-left: 5px; white-space: nowrap; }
.start { width: 77px; height: 19px; margin-top: 2px; display: flex; align-items: center; padding-left: 15px; gap: 15px; background: #f5ede6; border: 1px solid #e2cdb3; border-radius: 2px; font-size: 10.500px; font-weight: 700; }
.start-ic { width: 10px; height: 10px; }
.prog-row { display: flex; align-items: center; margin-top: 12px; }
.bar { width: 114px; height: 6px; background: #fff; border: 1px solid #e2cdb3; }
.bar-fill { height: 100%; background: #0a9cd8; }
.prog-lbl { margin-left: 7px; font-size: 10.500px; }
.more { height: 30px; flex: none; margin-top: 10px; display: flex; align-items: center; padding-left: 14px; gap: 14px; border: 1px solid #e2cdb3; border-radius: 2px; font-size: 12px; font-weight: 700; }
.more-ic { width: 12px; height: 12px; }
.tags { height: 54px; flex: none; margin-top: 23px; border-top: 1px solid #e2cdb3; display: flex; align-items: center; padding: 0 2px 0 4px; }
.tags-ic { width: 12px; height: 8px; }
.tags-lbl { margin-left: 9px; font-size: 13px; font-weight: 700; white-space: nowrap; }
.tags-pen { width: 12px; height: 12px; margin-left: auto; }
.tags-x { width: 16px; height: 16px; margin-left: 13px; }
.exports { margin-top: auto; padding-bottom: 3px; }
.exp-title { font-size: 10.500px; font-weight: 700; line-height: 13px; }
.exp-links { display: flex; margin: 2px 0 0 2px; gap: 4px; font-size: 11.500px; line-height: 14px; color: #a89f95; white-space: nowrap; }
.exp { display: flex; align-items: center; gap: 3px; }
.exp-ic { width: 10px; height: 10px; }
.collapse { position: absolute; left: 919px; top: 278px; width: 11px; height: 42px; background: #fbf7f2; border-right: 1px solid #e9dccb; clip-path: polygon(0 0, 100% 20%, 100% 80%, 0 100%); color: #d8bd9a; font-size: 11px; font-weight: 700; display: flex; align-items: center; justify-content: center; }

.rail { flex: 1; min-width: 0; display: flex; flex-direction: column; background: #fff; border-left: 1px solid #e4d2bb; }
.rail-cell { height: 81px; flex: none; display: flex; flex-direction: column; align-items: center; padding-top: 30px; border-bottom: 1px solid #f1e8dc; }
.rail-ic { width: 20px; height: 20px; }
.rail-hist { border-bottom: 0; height: 100px; }
.rail-badge { width: 22px; height: 12px; margin-top: 10px; background: #e6003a; color: #fff; font-size: 9.500px; font-weight: 700; line-height: 12px; text-align: center; }
.rail-fill { flex: 1; }
.rail-up { width: 24px; height: 24px; margin: 0 0 9px 8px; border-radius: 50%; background: #f5ede6; border: 1px solid #e2cdb3; display: flex; align-items: center; justify-content: center; }
.up-ic { width: 10px; height: 6px; }
.scrollthumb { position: absolute; left: 1271px; top: 6px; width: 7px; height: 65px; border-radius: 4px; background: #7f7f7f; z-index: 2; }
.fade { position: absolute; left: 0; right: 0; bottom: 0; height: 24px; background: linear-gradient(rgba(255, 255, 255, 0), rgba(255, 255, 255, .3)); pointer-events: none; }

/* dock */
.dockrow { flex: 1; min-height: 0; position: relative; padding-left: 156px; background:
  linear-gradient(rgba(0, 0, 0, .85), rgba(0, 0, 0, 0) 14px),
  repeating-linear-gradient(0deg, rgba(0, 0, 0, .22) 0 1px, rgba(255, 255, 255, 0) 1px 3px, rgba(255, 170, 90, .07) 3px 4px, rgba(0, 0, 0, .12) 4px 7px),
  linear-gradient(90deg, #553229 0, #5c3a30 12%, #4a2a22 100%); }
.dockrow::after { content: ""; position: absolute; left: 1124px; right: 0; top: 0; bottom: 0; background:
  linear-gradient(rgba(0, 0, 0, .8), rgba(0, 0, 0, 0) 12px),
  repeating-linear-gradient(0deg, rgba(0, 0, 0, .35) 0 1px, rgba(255, 190, 60, .16) 1px 2px, rgba(0, 0, 0, .2) 2px 5px),
  linear-gradient(#1c1006 0, #6a3d0d 32%, #a9620f 58%, #6b3a0a 78%, #2f1a06 100%); }
.dock { width: 968px; height: 50px; position: relative; z-index: 1; display: flex; padding: 7px 0 0 2.500px; background: linear-gradient(90deg, #a3695a 0, #bb7b66 28%, #c97f50 34%, #dd7f3c 45%, #e8853a 65%, #e58638 80%, #b77f50 100%); border-radius: 4px 4px 0 0; }
.di { width: 41px; height: 43px; flex: none; display: flex; justify-content: center; position: relative; }
.dk { width: 34px; height: 34px; }
.run::after { content: ""; position: absolute; left: 19px; top: 36px; width: 3px; height: 3px; border-radius: 50%; background: #2b0f08; }
.dk-xd { font: 700 19px "Liberation Sans", sans-serif; fill: #ff61f6; text-anchor: middle; }
.dk-jun { font: 700 6px "Liberation Sans", sans-serif; fill: #fff; text-anchor: middle; }
.dk-day { font: 400 16px "Liberation Sans", sans-serif; fill: #333; text-anchor: middle; }
.dk-ps { font: 400 20px "Liberation Sans", sans-serif; fill: #cfeeff; text-anchor: middle; }
.dk-x { font: 400 31px "Liberation Serif", serif; fill: #2f3e4d; text-anchor: middle; }
.dock-badge { position: absolute; right: 0; top: -3px; width: 14px; height: 14px; border-radius: 50%; background: #fff; box-shadow: inset 0 0 0 5px #e74040; }
.dock-sep { width: 19px; flex: none; position: relative; }
.dock-sep::before { content: ""; position: absolute; left: 9px; top: 1px; height: 33px; width: 1px; background: #a85a20; }
.thumb { position: relative; width: 37px; height: 37px; margin-top: -1px; }
.th-a-blue { position: absolute; left: 0; top: 6px; width: 23px; height: 20px; background: #2a6ed0; }
.th-a-grey { position: absolute; left: 23px; top: 6px; width: 14px; height: 20px; background: #6b6e78; }
.th-a-mini { position: absolute; right: 0; bottom: 3px; width: 13px; height: 13px; background: #3a4a60; border: 1px solid #ddd; }
.th-b-bar { position: absolute; left: 0; top: 6px; width: 37px; height: 2px; background: #222; }
.th-b-page { position: absolute; left: 0; top: 8px; width: 37px; height: 20px; background: #e4ecf8; }
.th-b-logo { position: absolute; right: 0; bottom: 0; width: 13px; height: 13px; }
.th-c { background: #fff; width: 31px; margin-top: 2px; height: 36px; }
.th-c-line { position: absolute; left: 1px; right: 1px; top: 1px; height: 3px; background: #e3e6ea; }
.th-c-blue { position: absolute; left: 2px; right: 6px; top: 11px; height: 2px; background: #1f6ed4; }
.th-c-app { position: absolute; right: 0; bottom: 0; width: 12px; height: 12px; }
.th-d { background: #fff; width: 23px; height: 36px; margin-top: 2px; }
.th-d-head { position: absolute; left: 0; right: 0; top: 0; height: 5px; background: #1d4f90; }
.th-d-green { position: absolute; left: 2px; top: 7px; width: 8px; height: 4px; background: #8bc34a; }
.th-d-chart { position: absolute; left: 2px; right: 2px; top: 20px; height: 5px; background: #f4c24d; }
.th-d-app { position: absolute; right: -5px; bottom: 0; width: 13px; height: 13px; }
```
